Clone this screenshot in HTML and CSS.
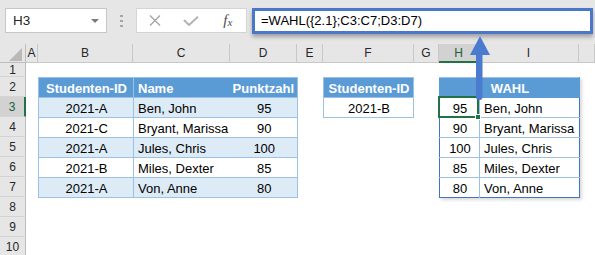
FILE: index.html
```html
<!DOCTYPE html>
<html lang="de">
<head>
  <meta charset="UTF-8">
  <meta name="viewport" content="width=device-width, initial-scale=1.0">
  <title>WAHL</title>
  <link rel="stylesheet" href="styles.css">
</head>
<body>
  <div class="toolbar">
    <div class="name-box">
      <span>H3</span>
      <span class="drop"></span>
    </div>
    <div class="grip"><i></i><i></i><i></i></div>
    <div class="fx-buttons">
      <span class="btn">
        <svg width="12" height="11" viewBox="0 0 12 11"><path d="M1 0.5 L11 10.5 M11 0.5 L1 10.5" stroke="#a6a6a6" stroke-width="1.4" fill="none"/></svg>
      </span>
      <span class="btn">
        <svg width="16" height="10" viewBox="0 0 16 10"><path d="M1 4 L6 9 L15 0.8" stroke="#b4b4b4" stroke-width="2" fill="none"/></svg>
      </span>
      <span class="btn fx">f<small>x</small></span>
    </div>
    <div class="formula">=WAHL({2.1};C3:C7;D3:D7)</div>
  </div>

  <div class="sheet">
    <div class="corner"><span class="tri"></span></div>
    <div class="col-head">A</div>
    <div class="col-head">B</div>
    <div class="col-head">C</div>
    <div class="col-head">D</div>
    <div class="col-head">E</div>
    <div class="col-head">F</div>
    <div class="col-head">G</div>
    <div class="col-head active">H</div>
    <div class="col-head">I</div>
    <div class="col-head"></div>

    <div class="row-head">1</div>
    <div class="row-head">2</div>
    <div class="row-head active">3</div>
    <div class="row-head">4</div>
    <div class="row-head">5</div>
    <div class="row-head">6</div>
    <div class="row-head">7</div>
    <div class="row-head">8</div>
    <div class="row-head">9</div>
    <div class="row-head">10</div>

    <table class="data scores">
      <colgroup><col class="w-b"><col class="w-c"><col class="w-d"></colgroup>
      <tr><th class="c sep">Studenten-ID</th><th class="l">Name</th><th class="r">Punktzahl</th></tr>
      <tr class="band"><td class="c sep">2021-A</td><td>Ben, John</td><td class="c">95</td></tr>
      <tr><td class="c sep">2021-C</td><td>Bryant, Marissa</td><td class="c">90</td></tr>
      <tr class="band"><td class="c sep">2021-A</td><td>Jules, Chris</td><td class="c">100</td></tr>
      <tr><td class="c sep">2021-B</td><td>Miles, Dexter</td><td class="c">85</td></tr>
      <tr class="band"><td class="c sep">2021-A</td><td>Von, Anne</td><td class="c">80</td></tr>
    </table>

    <table class="data lookup">
      <tr><th class="c">Studenten-ID</th></tr>
      <tr><td class="c">2021-B</td></tr>
    </table>

    <table class="data result">
      <colgroup><col class="w-h"><col class="w-i"></colgroup>
      <tr><th class="c" colspan="2">WAHL</th></tr>
      <tr><td class="c sep">95</td><td>Ben, John</td></tr>
      <tr><td class="c sep">90</td><td>Bryant, Marissa</td></tr>
      <tr><td class="c sep">100</td><td>Jules, Chris</td></tr>
      <tr><td class="c sep">85</td><td>Miles, Dexter</td></tr>
      <tr><td class="c sep">80</td><td>Von, Anne</td></tr>
    </table>
  </div>

  <div class="selection"><span class="handle"></span></div>

  <svg class="arrow" width="26" height="68" viewBox="0 0 26 68">
    <rect x="9" y="18" width="6.5" height="48" rx="3" fill="#4a7bcf"/>
    <polygon points="13,2 3,21 23,21" fill="#4a7bcf"/>
  </svg>
</body>
</html>
```

FILE: styles.css
```css
* {
  box-sizing: border-box;
  margin: 0;
  padding: 0;
}

body {
  width: 595px;
  height: 255px;
  overflow: hidden;
  position: relative;
  background: #ffffff;
  color: #000000;
  font-family: "Liberation Sans", Arial, sans-serif;
}

/* formula toolbar */
.toolbar {
  height: 44px;
  background: #e6e6e6;
  display: flex;
  align-items: flex-start;
  padding-top: 8px;
}

.name-box {
  margin-left: 5px;
  width: 102px;
  height: 25px;
  background: #ffffff;
  border: 1px solid #c6c6c6;
  display: flex;
  align-items: center;
  justify-content: space-between;
  padding: 0 7px 0 7px;
  font-size: 13.5px;
  color: #262626;
}

.drop {
  width: 0;
  height: 0;
  border-left: 4px solid transparent;
  border-right: 4px solid transparent;
  border-top: 4px solid #7a7a7a;
}

.grip {
  margin: 7px 0 0 13px;
  display: flex;
  flex-direction: column;
  gap: 3px;
}

.grip i {
  width: 3px;
  height: 2px;
  background: #a6a6a6;
}

.fx-buttons {
  margin-left: 13px;
  width: 111px;
  height: 25px;
  background: #ffffff;
  border: 1px solid #d4d4d4;
  display: flex;
  align-items: center;
}

.btn {
  width: 37px;
  display: flex;
  justify-content: center;
  align-items: center;
}

.fx {
  font-family: "Liberation Serif", "Times New Roman", serif;
  font-style: italic;
  font-size: 15px;
  color: #4d4d4d;
}

.fx small {
  font-size: 11px;
  position: relative;
  top: 1px;
}

.formula {
  margin-left: 5px;
  width: 341px;
  height: 26px;
  background: #ffffff;
  border: 3px solid #4a78c8;
  box-shadow: 0 3px 4px rgba(0, 0, 0, 0.3);
  padding-left: 6px;
  font-size: 13px;
  line-height: 20px;
}

/* sheet grid */
.sheet {
  display: grid;
  grid-template-columns: 26px 12px 95px 97px 67px 26px 91px 25px 40px 100px 1fr;
  grid-template-rows: 19px 14px repeat(9, 20px);
  font-size: 13px;
}

.corner {
  background: #e6e6e6;
  border-right: 1px solid #bdbdbd;
  border-bottom: 1px solid #bdbdbd;
  display: flex;
  justify-content: flex-end;
  align-items: flex-end;
  padding: 0 3px 1px 0;
}

.tri {
  width: 0;
  height: 0;
  border-left: 13px solid transparent;
  border-bottom: 13px solid #b9b9b9;
}

.col-head {
  background: #e6e6e6;
  border-right: 1px solid #c8c8c8;
  border-bottom: 1px solid #c8c8c8;
  display: flex;
  align-items: center;
  justify-content: center;
  font-size: 12px;
  color: #262626;
}

.col-head.active {
  background: #d2d2d2;
  border-bottom: 2px solid #217346;
  color: #1e5e3a;
}

.row-head {
  grid-column: 1;
  background: #e6e6e6;
  border-right: 1px solid #bdbdbd;
  border-bottom: 1px solid #d4d4d4;
  display: flex;
  align-items: center;
  justify-content: center;
  font-size: 12px;
  color: #262626;
}

.row-head.active {
  background: #d2d2d2;
  border-right: 2px solid #217346;
  color: #1e5e3a;
}

/* tables */
.data {
  border-collapse: collapse;
  table-layout: fixed;
  width: 100%;
  align-self: start;
}

.data th,
.data td {
  height: 20px;
  padding: 0 3px 1px 4px;
  white-space: nowrap;
  overflow: hidden;
  vertical-align: bottom;
  text-align: left;
}

.data th {
  background: #5b9bd5;
  color: #ffffff;
  font-weight: bold;
}

.data td {
  border-top: 1px solid #9bc2e6;
}

.data .c { text-align: center; }
.data .r { text-align: right; padding-left: 0; }
.data .sep { border-right: 1px solid #9bc2e6; }

.band td {
  background: #ddebf7;
}

.scores {
  grid-column: 3 / 6;
  grid-row: 3 / 9;
  border: 1px solid #9bc2e6;
}

.w-b { width: 95px; }
.w-c { width: 97px; }
.w-d { width: 67px; }

.lookup {
  grid-column: 7 / 8;
  grid-row: 3 / 5;
  border: 1px solid #9bc2e6;
}

.result {
  grid-column: 9 / 11;
  grid-row: 3 / 9;
  border: 1px solid #4472c4;
  box-shadow: 2px 2px 3px rgba(0, 0, 0, 0.15);
}

.result th {
  border: 1px solid #5b9bd5;
  border-top-color: #9bc2e6;
}

.w-h { width: 40px; }
.w-i { width: 100px; }

/* active cell and arrow overlays */
.selection {
  position: absolute;
  left: 438px;
  top: 96px;
  width: 41px;
  height: 22px;
  border: 2px solid #217346;
}

.handle {
  position: absolute;
  right: -4px;
  bottom: -4px;
  width: 6px;
  height: 6px;
  background: #217346;
  border: 1px solid #ffffff;
}

.arrow {
  position: absolute;
  left: 467px;
  top: 34px;
}
```
